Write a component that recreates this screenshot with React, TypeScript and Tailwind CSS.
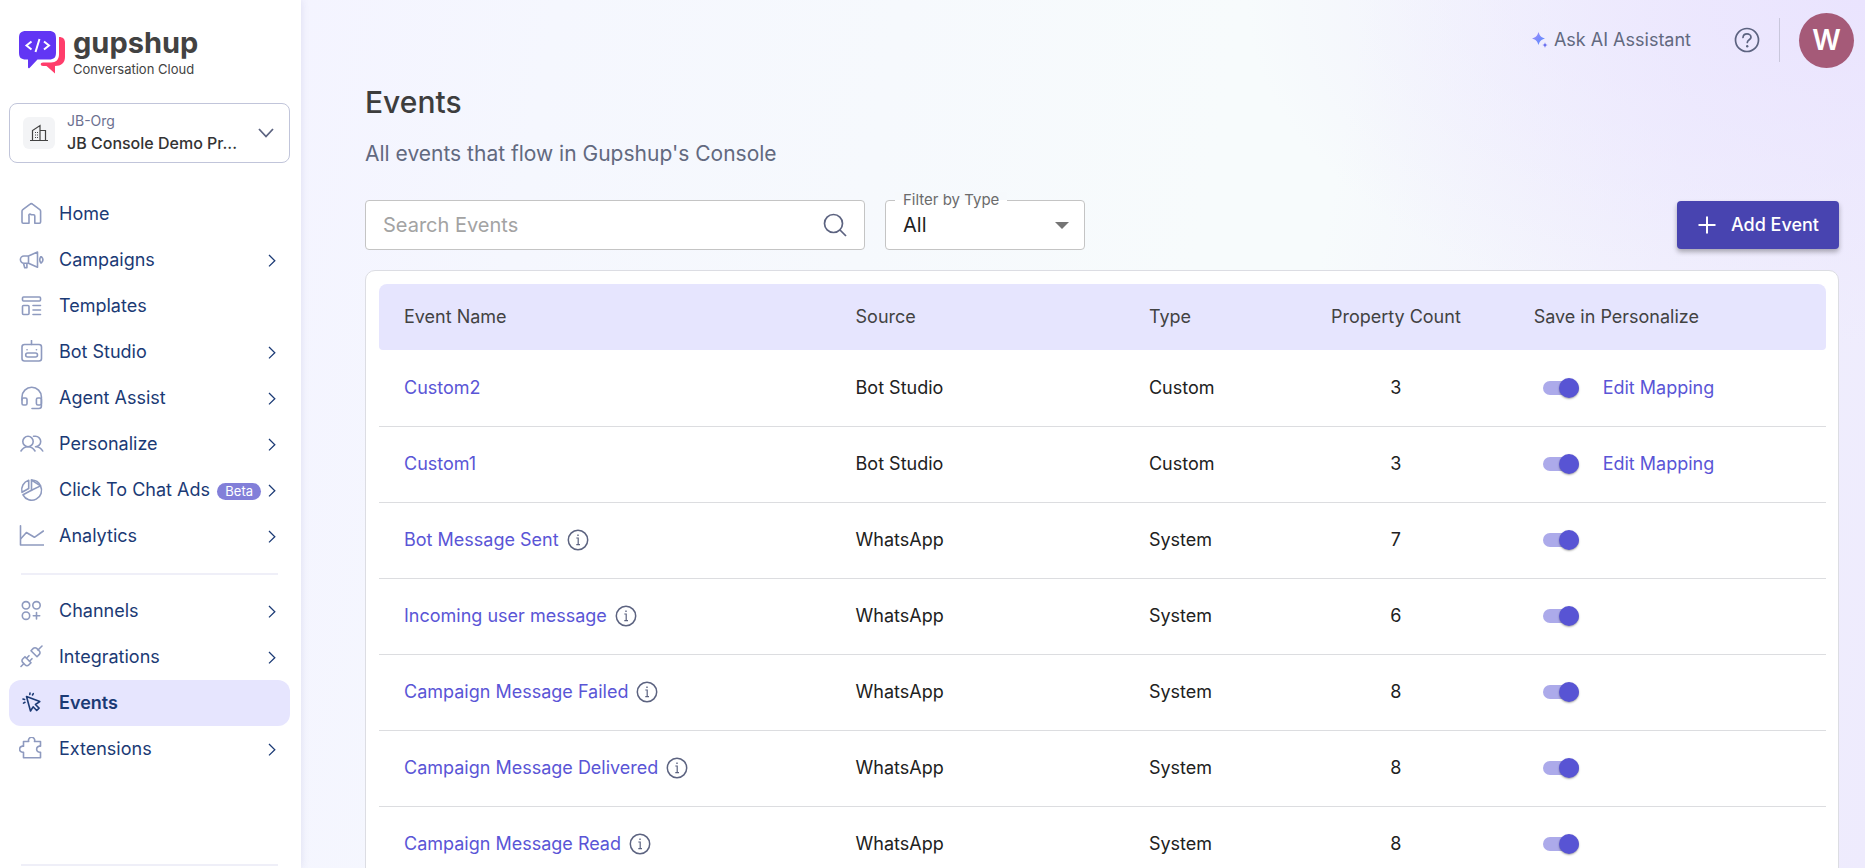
import { type FC, type ReactNode } from 'react';

const icons: Record<string, ReactNode> = {
  home: (
    <path d="M3 9.2a2 2 0 0 1 .8-1.6l7-5.3a2.4 2.4 0 0 1 3 0l7 5.3a2 2 0 0 1 .8 1.6V20a1.2 1.2 0 0 1-1.2 1.2h-4.6V14a1.2 1.2 0 0 0-1.2-1.2h-2.4A1.2 1.2 0 0 0 10 14v7.2H4.2A1.2 1.2 0 0 1 3 20z" />
  ),
  campaigns: (
    <>
      <path d="M9.5 8H5a3.6 3.6 0 0 0 0 7.2h4.5l9 4V4zM9.5 8v7.2M4.5 15.2l1.2 4.6h2.2v-4.6" />
      <path d="M21.7 8.8c-1.2 1.9-1.2 4.1 0 6M22.5 8.8c1.8 1.9 1.8 4.1 0 6" />
    </>
  ),
  templates: (
    <>
      <rect x="3.5" y="3" width="18" height="4" rx="1" />
      <rect x="3.5" y="11.5" width="6.5" height="9" rx="1" />
      <path d="M14 11.5h7.5M14 16h7.5M14 20.5h7.5" />
    </>
  ),
  bot: (
    <>
      <rect x="3" y="4.5" width="19.5" height="16.5" rx="2.5" />
      <rect x="6.7" y="13" width="11.8" height="4" rx="2" />
      <path d="M12.5 .5v4M8 9.7h.1M17.4 9.7h.1" />
    </>
  ),
  agent: (
    <>
      <path d="M3 14v-3a9.7 9.7 0 0 1 19.4 0v9a2.5 2.5 0 0 1-2.5 2.5H13" />
      <rect x="3" y="12" width="5" height="7" rx="1.5" />
      <rect x="17.4" y="12" width="5" height="7" rx="1.5" />
    </>
  ),
  personalize: (
    <>
      <circle cx="9" cy="9.5" r="5.2" />
      <path d="M2 19c1.6-2.9 4-4.3 7-4.3s5.4 1.4 7 4.3" />
      <path d="M14.5 4.3h2a5.2 5.2 0 0 1 0 10.4c3.3 0 5.7 1.4 7.2 4.3" />
    </>
  ),
  pie: (
    <>
      <path d="M12.5 2v10.3L4 16.8a9.8 9.8 0 1 0 17.5-8.9z" />
      <path d="M12.5 2a9.8 9.8 0 0 1 9 5.9l-9 4.4M9.7 2.3v8.2L3 14.3a10 10 0 0 1 6.7-12z" />
    </>
  ),
  analytics: (
    <>
      <path d="M1.5 1.8v19.2h23" />
      <path d="m2 14.5 5.4-6 8 4.8 9-6.3" />
    </>
  ),
  channels: (
    <>
      <circle cx="7" cy="6.3" r="3.7" />
      <circle cx="17.5" cy="6.3" r="3.7" />
      <circle cx="7" cy="16.7" r="3.7" />
      <path d="M17.5 13.5v6.4M14.3 16.7h6.4" />
    </>
  ),
  integrations: (
    <>
      <path d="m19 5 4-4M2 21.5l3-3M6.3 20a2.4 2.4 0 0 0 3.4 0l2.3-2.3-6-6L3.7 14a2.4 2.4 0 0 0 0 3.4z" />
      <path d="m7.5 13.2 2.5-2.5M10.5 16.2l2.5-2.5M12 5.7l6 6 2.3-2.3a2.4 2.4 0 0 0 0-3.4l-2.6-2.6a2.4 2.4 0 0 0-3.4 0z" />
    </>
  ),
  events: (
    <path d="m7.5 5.5 4 14.5 2.6-4.2 3.6 3.7 2.4-2.4-3.7-3.6 4.4-2.9zM10.8 3.5l.2-1.4M13.5 4l.8-1.3M5.6 8.5l-1.6-.5M6 11.3l-1.5.8" />
  ),
  extensions: (
    <path d="M4.5 4.5h5.2a3.1 3.1 0 1 1 5.8 0h6v4.7a3.1 3.1 0 1 0 0 6v5.6h-17v-5.6a3.1 3.1 0 1 1 0-6z" />
  )
};

type NavLink = {
  label: string;
  icon: string;
  expandable?: boolean;
  badge?: string;
  active?: boolean;
};

const mainLinks: NavLink[] = [
  { label: 'Home', icon: 'home' },
  { label: 'Campaigns', icon: 'campaigns', expandable: true },
  { label: 'Templates', icon: 'templates' },
  { label: 'Bot Studio', icon: 'bot', expandable: true },
  { label: 'Agent Assist', icon: 'agent', expandable: true },
  { label: 'Personalize', icon: 'personalize', expandable: true },
  { label: 'Click To Chat Ads', icon: 'pie', expandable: true, badge: 'Beta' },
  { label: 'Analytics', icon: 'analytics', expandable: true }
];

const setupLinks: NavLink[] = [
  { label: 'Channels', icon: 'channels', expandable: true },
  { label: 'Integrations', icon: 'integrations', expandable: true },
  { label: 'Events', icon: 'events', active: true },
  { label: 'Extensions', icon: 'extensions', expandable: true }
];

type EventRow = {
  name: string;
  source: string;
  type: 'Custom' | 'System';
  count: number;
};

const events: EventRow[] = [
  { name: 'Custom2', source: 'Bot Studio', type: 'Custom', count: 3 },
  { name: 'Custom1', source: 'Bot Studio', type: 'Custom', count: 3 },
  { name: 'Bot Message Sent', source: 'WhatsApp', type: 'System', count: 7 },
  { name: 'Incoming user message', source: 'WhatsApp', type: 'System', count: 6 },
  { name: 'Campaign Message Failed', source: 'WhatsApp', type: 'System', count: 8 },
  { name: 'Campaign Message Delivered', source: 'WhatsApp', type: 'System', count: 8 },
  { name: 'Campaign Message Read', source: 'WhatsApp', type: 'System', count: 8 }
];

const Logo: FC = () => (
  <div className="flex items-start gap-2">
    <svg viewBox="0 0 46 43" className="mt-1 h-[43px] w-[46px]" fill="none">
      <path
        d="M40 6c4 0 6 2 6 6v14c0 6-4 9-10 9v7.5L27.5 35H24c-3 0-3-3.5 0-3.5h8c5 0 8-3 8-8z"
        fill="#ff3d6b"
      />
      <path
        d="M7 0h23c5 0 7 2 7 7v14.5c0 5-2 7-7 7H18.5L10.5 37c-.7.5-1.5.2-1.5-.7V28.500H7c-5 0-7-2-7-7V7c0-5 2-7 7-7z"
        fill="#6236f4"
      />
      <path
        d="m12.5 10.500-5 4 5 4M25 10.500l5 4-5 4M20.500 8l-4 13"
        stroke="#fff"
        strokeWidth="2"
      />
    </svg>
    <div className="flex flex-col text-[#424242]">
      <span className="text-[29px] leading-8 font-bold">gupshup</span>
      <span className="text-[13px] leading-5">Conversation Cloud</span>
    </div>
  </div>
);

const NavItem: FC<{ link: NavLink }> = ({ link }) => (
  <li>
    <a
      href="#"
      className={`flex h-[46px] items-center rounded-xl pr-[14px] pl-[10px] text-lg text-[#1b3a75] ${
        link.active ? 'bg-[#e6e5fe] font-semibold' : 'font-normal'
      }`}
    >
      <svg
        viewBox="0 0 25 24"
        className={`mr-[15px] h-6 w-[25px] shrink-0 ${
          link.active ? 'text-[#1b3a75]' : 'text-[#8e9abf]'
        }`}
        fill="none"
        stroke="currentColor"
        strokeWidth="1.6"
        strokeLinecap="round"
        strokeLinejoin="round"
      >
        {icons[link.icon]}
      </svg>
      <span className="whitespace-nowrap">{link.label}</span>
      {link.badge && (
        <span className="mt-[2px] ml-auto rounded-full bg-[#827fd9] px-2 text-[13px] leading-[17px] text-white">
          {link.badge}
        </span>
      )}
      {link.expandable && (
        <svg
          viewBox="0 0 8 14"
          className={`h-[14px] w-2 shrink-0 ${link.badge ? 'ml-[7px]' : 'ml-auto'}`}
          fill="none"
          stroke="currentColor"
          strokeWidth="1.3"
        >
          <path d="m1 2 5.8 5.7L1 13.4" />
        </svg>
      )}
    </a>
  </li>
);

const Sidebar: FC = () => (
  <aside className="z-10 flex w-[301px] shrink-0 flex-col bg-white px-[9px] pb-[2px] shadow-[0_0_8px_rgba(60,60,140,0.12)]">
    <div className="pt-[27px] pl-[10px]">
      <Logo />
    </div>

    <button
      type="button"
      className="mt-6 mr-[2px] flex h-[60px] items-center rounded-lg border border-[#c1c5da] pr-[15px] pl-[13px] text-left"
    >
      <span className="flex size-8 items-center justify-center rounded-md bg-[#f3f4f6]">
        <svg
          viewBox="0 0 18 18"
          className="size-[18px]"
          fill="none"
          stroke="#424242"
          strokeWidth="1.2"
        >
          <path d="M0 16.5h18M2.5 16.5V6.5L10 1.5v15M10 6.5h5.5v10M5 8.5h1M7 8.5h1M5 11h1M7 11h1M5 13.5h1M7 13.5h1" />
        </svg>
      </span>
      <span className="ml-3 flex flex-col">
        <span className="text-sm text-[#6b7090]">JB-Org</span>
        <span className="text-base font-medium text-[#333]">JB Console Demo Pr...</span>
      </span>
      <svg
        viewBox="0 0 16 10"
        className="ml-auto h-[10px] w-4"
        fill="none"
        stroke="#5c6380"
        strokeWidth="1.8"
      >
        <path d="m1 1 7 7.5L15 1" />
      </svg>
    </button>

    <nav className="mt-7 mr-[2px] flex flex-1 flex-col">
      <ul>
        {mainLinks.map((link) => (
          <NavItem key={link.label} link={link} />
        ))}
      </ul>
      <hr className="mx-3 mt-[14px] mb-[13px] border-t-2 border-[#efeff8]" />
      <ul>
        {setupLinks.map((link) => (
          <NavItem key={link.label} link={link} />
        ))}
      </ul>
      <hr className="mx-3 mt-auto border-t-2 border-[#efeff8]" />
    </nav>
  </aside>
);

const TopBar: FC = () => (
  <header className="flex h-20 items-center justify-end pr-[11px]">
    <button type="button" className="flex items-center gap-[6px] text-lg text-[#62697f]">
      <svg viewBox="0 0 16 16" className="size-4">
        <defs>
          <linearGradient id="spark" x1="0" y1="0" x2="1" y2="1">
            <stop offset="0" stopColor="#a78bfa" />
            <stop offset="1" stopColor="#4f8cff" />
          </linearGradient>
        </defs>
        <path
          d="M6.5 0c1.2 3.9 2.6 5.3 6.5 6.5-3.9 1.2-5.3 2.6-6.5 6.5C5.3 9.1 3.9 7.7 0 6.5 3.9 5.3 5.3 3.9 6.5 0z"
          fill="url(#spark)"
        />
        <path
          d="M13 10.3c.4 1.8 1 2.4 2.8 2.8-1.8.4-2.4 1-2.8 2.8-.4-1.8-1-2.4-2.8-2.8 1.8-.4 2.4-1 2.8-2.8z"
          fill="#6a6ff0"
        />
      </svg>
      Ask AI Assistant
    </button>
    <button type="button" aria-label="Help" className="ml-[43px]">
      <svg
        viewBox="0 0 26 26"
        className="size-[26px]"
        fill="none"
        stroke="#5c6380"
        strokeWidth="1.7"
        strokeLinecap="round"
      >
        <circle cx="13" cy="13" r="11.5" />
        <path d="M9 10.5c.2-2.3 1.8-3.6 4-3.6s4 1.4 4 3.3c0 2.5-3.7 2.6-3.7 5.3" />
        <path d="M13.2 19.2v.1" strokeWidth="2.4" />
      </svg>
    </button>
    <span className="mx-[19px] h-11 w-px bg-[#c9c7dc]" />
    <button
      type="button"
      className="size-[55px] rounded-full bg-[#a55a78] text-[28px] font-semibold text-white"
    >
      W
    </button>
  </header>
);

const InfoIcon: FC = () => (
  <svg
    viewBox="0 0 22 22"
    className="size-[22px]"
    fill="none"
    stroke="#5c6380"
    strokeWidth="1.5"
  >
    <circle cx="11" cy="11" r="9.7" />
    <path d="M9.3 9h1.9v6.7M9.3 15.7h3.7" strokeWidth="1.2" />
    <path d="M10.3 6.3h1.4" />
  </svg>
);

const Filters: FC = () => (
  <div className="mt-8 flex items-center">
    <label className="flex h-[50px] w-[500px] items-center rounded border border-[#c4c4c4] bg-white px-[17px]">
      <input
        type="text"
        aria-label="Search Events"
        placeholder="Search Events"
        className="min-w-0 flex-1 text-xl outline-none placeholder:text-[#a3a3a3]"
      />
      <svg
        viewBox="0 0 24 24"
        className="size-6"
        fill="none"
        stroke="#5c6380"
        strokeWidth="1.7"
      >
        <circle cx="10.5" cy="10.5" r="9" />
        <path d="m17 17 6 6" />
      </svg>
    </label>

    <div className="relative ml-5 h-[50px] w-[200px]">
      <label
        htmlFor="type-filter"
        className="absolute -top-2 left-[10px] bg-[linear-gradient(#f6f9fc_50%,#fff_50%)] px-2 text-[15px] leading-4 text-[#6b6b6b]"
      >
        Filter by Type
      </label>
      <select
        id="type-filter"
        className="h-full w-full appearance-none rounded border border-[#c4c4c4] bg-white pl-[17px] text-xl text-[#1f1f1f]"
      >
        <option>All</option>
        <option>Custom</option>
        <option>System</option>
      </select>
      <svg
        viewBox="0 0 14 7"
        className="pointer-events-none absolute top-[22px] right-4 h-[7px] w-[14px]"
        fill="#757575"
      >
        <path d="M0 0h14L7 7z" />
      </svg>
    </div>

    <button
      type="button"
      className="ml-auto flex h-12 items-center gap-[14px] rounded bg-[#4844b0] px-5 text-lg font-medium text-white shadow-[0_3px_5px_rgba(0,0,0,0.3)]"
    >
      <svg
        viewBox="0 0 20 20"
        className="size-5"
        stroke="currentColor"
        strokeWidth="2"
      >
        <path d="M10 1.5v17M1.5 10h17" />
      </svg>
      Add Event
    </button>
  </div>
);

const EventsTable: FC = () => (
  <section className="mt-5 rounded-[10px] border border-[#dcdde3] bg-white p-[13px] pr-3">
    <table className="w-full table-fixed text-left text-lg">
      <thead>
        <tr className="h-[66px] text-[#424242]">
          <th className="w-[31%] rounded-tl-lg rounded-bl bg-[#e6e5fe] px-[25px] font-normal">
            Event Name
          </th>
          <th className="w-[20%] bg-[#e6e5fe] px-7 font-normal">Source</th>
          <th className="w-[11%] bg-[#e6e5fe] px-8 font-normal">Type</th>
          <th className="w-[16%] bg-[#e6e5fe] pr-4 pl-6 text-center font-normal">
            Property Count
          </th>
          <th className="rounded-tr-lg rounded-br bg-[#e6e5fe] px-[26px] font-normal">
            Save in Personalize
          </th>
        </tr>
      </thead>
      <tbody>
        {events.map((event) => (
          <tr key={event.name} className="h-[76px] border-b border-[#dcdde0] text-[#212121]">
            <td className="px-[25px]">
              <div className="flex items-center gap-2">
                <a href="#" className="text-[#5a55d6]">
                  {event.name}
                </a>
                {event.type === 'System' && <InfoIcon />}
              </div>
            </td>
            <td className="px-7">{event.source}</td>
            <td className="px-8">{event.type}</td>
            <td className="pr-4 pl-6 text-center">{event.count}</td>
            <td className="pl-[35px]">
              <div className="flex items-center gap-6">
                <input
                  type="checkbox"
                  defaultChecked
                  aria-label={`Save ${event.name} in Personalize`}
                  className="flex h-[14px] w-9 appearance-none items-center rounded-full bg-gray-300 before:size-5 before:shrink-0 before:rounded-full before:bg-gray-100 before:shadow-[0_1px_2px_rgba(0,0,0,0.35)] checked:justify-end checked:bg-[#acaaea] checked:before:bg-[#5854d4]"
                />
                {event.type === 'Custom' && (
                  <a href="#" className="text-[#5a55d6]">
                    Edit Mapping
                  </a>
                )}
              </div>
            </td>
          </tr>
        ))}
      </tbody>
    </table>
  </section>
);

const App: FC = () => (
  <div className="flex h-screen overflow-hidden font-['Inter',sans-serif]">
    <Sidebar />
    <div className="min-w-0 flex-1 overflow-y-auto bg-[radial-gradient(ellipse_at_100%_0%,#eae4fe_0%,transparent_28%),linear-gradient(100deg,#f4f4ff_0%,#f5f7fe_15%,#f7fbfc_55%,#f7fbfc_62%,#f1f0fd_82%,#eeebfd_100%)] [scrollbar-width:none]">
      <TopBar />
      <main className="pr-[26px] pb-8 pl-16">
        <h1 className="text-[30px] leading-[44px] font-medium text-[#3d3d3d]">Events</h1>
        <p className="mt-4 text-[21px] leading-7 text-[#62697f]">
          All events that flow in Gupshup's Console
        </p>
        <Filters />
        <EventsTable />
      </main>
    </div>
  </div>
);

export default App;
